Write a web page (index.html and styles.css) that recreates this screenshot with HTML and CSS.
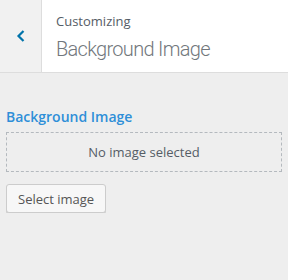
FILE: index.html
```html
<!DOCTYPE html>
<html lang="en">
<head>
  <meta charset="UTF-8" />
  <title>Customizing Background Image</title>
  <link rel="stylesheet" href="styles.css">
</head>
<body>

  <div class="panel-head">
    <button class="back" aria-label="Back">
      <svg width="10" height="14" viewBox="0 0 10 14"><path d="M7.5 2 L2.5 7 L7.5 12" fill="none" stroke="#0073aa" stroke-width="2.2"/></svg>
    </button>
    <div class="head-title">
      <span class="action">Customizing</span>
      <h3>Background Image</h3>
    </div>
  </div>

  <div class="control">
    <span class="control-title">Background Image</span>
    <div class="placeholder">No image selected</div>
    <button class="select-btn">Select image</button>
  </div>

</body>
</html>
```

FILE: styles.css
```css
/* Algemeen */
body {
  margin: 0;
  background: #eeeeee;
  font-family: "Open Sans", "Noto Sans", sans-serif;
  color: #555d66;
}
/* Kop */
.panel-head {
  display: flex;
  height: 72px;
  background: #fff;
  border-bottom: 1px solid #dddddd;
}
.back {
  width: 42px;
  border: none;
  border-right: 1px solid #dddddd;
  background: #f1f1f1;
  padding: 0;
  display: flex;
  align-items: center;
  justify-content: center;
  cursor: pointer;
}
.head-title {
  padding: 12px 0 0 14px;
}
.action {
  display: block;
  font-size: 13px;
  line-height: 18px;
  color: #555d66;
}
.head-title h3 {
  margin: 6px 0 0;
  font-family: Roboto, "Open Sans", sans-serif;
  font-size: 20px;
  font-weight: 300;
  letter-spacing: -0.7px;
  line-height: 26px;
  color: #72777c;
}
/* Control */
.control {
  padding: 34px 6px 0;
}
.control-title {
  display: block;
  font-size: 14px;
  font-weight: 600;
  line-height: 20px;
  color: #2e8fd8;
  margin-bottom: 5px;
}
.placeholder {
  border: 1px dashed #b4b9be;
  height: 38px;
  line-height: 38px;
  text-align: center;
  font-size: 13px;
  color: #555d66;
}
.select-btn {
  margin-top: 12px;
  height: 29px;
  padding: 0 11px;
  font-family: inherit;
  font-size: 13px;
  color: #555;
  background: #f7f7f7;
  border: 1px solid #cccccc;
  border-radius: 3px;
  box-shadow: 0 1px 0 #cccccc;
  cursor: pointer;
}
```
